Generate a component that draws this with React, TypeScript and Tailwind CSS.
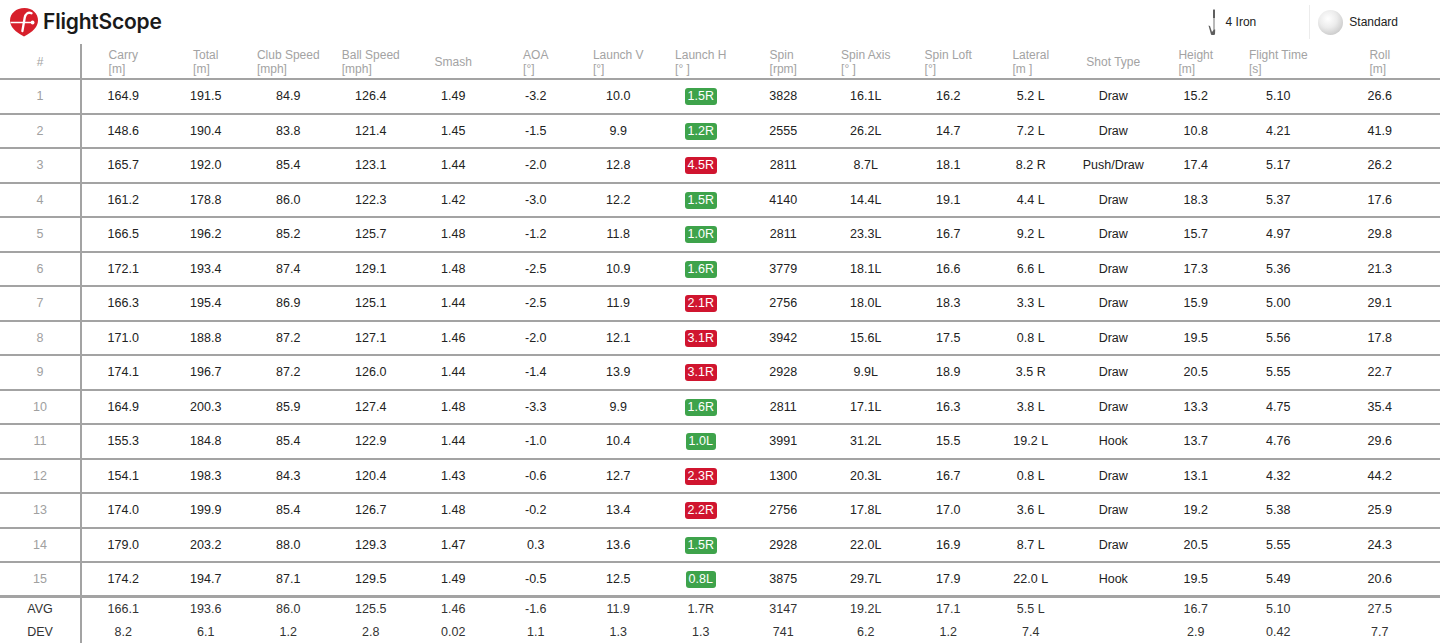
import React from "react"

type Shot = {
  carry: string
  total: string
  club: string
  ball: string
  smash: string
  aoa: string
  lv: string
  lh: string
  lhOk: boolean
  spin: string
  axis: string
  loft: string
  lateral: string
  type: string
  height: string
  time: string
  roll: string
}

const raw = `164.9 191.5 84.9 126.4 1.49 -3.2 10.0 1.5R g 3828 16.1L 16.2 5.2_L Draw 15.2 5.10 26.6
148.6 190.4 83.8 121.4 1.45 -1.5 9.9 1.2R g 2555 26.2L 14.7 7.2_L Draw 10.8 4.21 41.9
165.7 192.0 85.4 123.1 1.44 -2.0 12.8 4.5R r 2811 8.7L 18.1 8.2_R Push/Draw 17.4 5.17 26.2
161.2 178.8 86.0 122.3 1.42 -3.0 12.2 1.5R g 4140 14.4L 19.1 4.4_L Draw 18.3 5.37 17.6
166.5 196.2 85.2 125.7 1.48 -1.2 11.8 1.0R g 2811 23.3L 16.7 9.2_L Draw 15.7 4.97 29.8
172.1 193.4 87.4 129.1 1.48 -2.5 10.9 1.6R g 3779 18.1L 16.6 6.6_L Draw 17.3 5.36 21.3
166.3 195.4 86.9 125.1 1.44 -2.5 11.9 2.1R r 2756 18.0L 18.3 3.3_L Draw 15.9 5.00 29.1
171.0 188.8 87.2 127.1 1.46 -2.0 12.1 3.1R r 3942 15.6L 17.5 0.8_L Draw 19.5 5.56 17.8
174.1 196.7 87.2 126.0 1.44 -1.4 13.9 3.1R r 2928 9.9L 18.9 3.5_R Draw 20.5 5.55 22.7
164.9 200.3 85.9 127.4 1.48 -3.3 9.9 1.6R g 2811 17.1L 16.3 3.8_L Draw 13.3 4.75 35.4
155.3 184.8 85.4 122.9 1.44 -1.0 10.4 1.0L g 3991 31.2L 15.5 19.2_L Hook 13.7 4.76 29.6
154.1 198.3 84.3 120.4 1.43 -0.6 12.7 2.3R r 1300 20.3L 16.7 0.8_L Draw 13.1 4.32 44.2
174.0 199.9 85.4 126.7 1.48 -0.2 13.4 2.2R r 2756 17.8L 17.0 3.6_L Draw 19.2 5.38 25.9
179.0 203.2 88.0 129.3 1.47 0.3 13.6 1.5R g 2928 22.0L 16.9 8.7_L Draw 20.5 5.55 24.3
174.2 194.7 87.1 129.5 1.49 -0.5 12.5 0.8L g 3875 29.7L 17.9 22.0_L Hook 19.5 5.49 20.6`

const shots: Shot[] = raw.split("\n").map((line) => {
  const v = line.split(" ").map((s) => s.replace("_", " "))
  return {
    carry: v[0], total: v[1], club: v[2], ball: v[3], smash: v[4], aoa: v[5], lv: v[6],
    lh: v[7], lhOk: v[8] === "g", spin: v[9], axis: v[10], loft: v[11], lateral: v[12],
    type: v[13], height: v[14], time: v[15], roll: v[16],
  }
})

const summary = [
  { label: "AVG", values: ["166.1", "193.6", "86.0", "125.5", "1.46", "-1.6", "11.9", "1.7R", "3147", "19.2L", "17.1", "5.5 L", "", "16.7", "5.10", "27.5"] },
  { label: "DEV", values: ["8.2", "6.1", "1.2", "2.8", "0.02", "1.1", "1.3", "1.3", "741", "6.2", "1.2", "7.4", "", "2.9", "0.42", "7.7"] },
]

const headers: [string, string?][] = [
  ["Carry", "[m]"],
  ["Total", "[m]"],
  ["Club Speed", "[mph]"],
  ["Ball Speed", "[mph]"],
  ["Smash"],
  ["AOA", "[°]"],
  ["Launch V", "[°]"],
  ["Launch H", "[° ]"],
  ["Spin", "[rpm]"],
  ["Spin Axis", "[° ]"],
  ["Spin Loft", "[°]"],
  ["Lateral", "[m ]"],
  ["Shot Type"],
  ["Height", "[m]"],
  ["Flight Time", "[s]"],
  ["Roll", "[m]"],
]

const gridCols = "grid grid-cols-[82px_repeat(15,82.5px)_1fr]"

function Logo() {
  return (
    <div className="flex items-center gap-[4px]">
      <svg width="30" height="30" viewBox="0 0 30 30">
        <path d="M15.5 1C23.5 1 29 6.5 29 13.5 29 20 23.5 25 15 29.5 6.5 25 1 20 1 13.5 1 6.5 7 1 15.5 1Z" fill="#d71f2b" />
        <path d="M22.5 6.2c-3.4-1.4-6 .4-6.8 4.6L13.4 24" stroke="#fff" strokeWidth="2.3" fill="none" strokeLinecap="round" />
        <path d="M1.5 15.5h20.5" stroke="#fff" strokeWidth="1.5" />
        <circle cx="23.6" cy="15.5" r="1.9" fill="#fff" />
      </svg>
      <span className="text-[21px] font-semibold tracking-[-0.2px] text-[#1a1a1a] font-['Inter',sans-serif]">
        FlightScope
      </span>
    </div>
  )
}

function ClubIcon() {
  return (
    <svg width="12" height="28" viewBox="0 0 12 28">
      <path d="M8 1 L8 23" stroke="#9a9a9a" strokeWidth="1.4" />
      <path d="M8 2 L8 10" stroke="#555" strokeWidth="1.8" />
      <path d="M2.5 17.5 L4 18 L6 24 L8 21.5 L9.2 21.5 L9 26.5 C7.5 27.2 5.5 27.2 5 26.5 Z" fill="#5e5e5e" />
    </svg>
  )
}

function Ball() {
  return (
    <div className="h-[25px] w-[25px] rounded-full bg-[radial-gradient(circle_at_40%_35%,#ffffff_0%,#ececec_40%,#c4c4c4_85%,#b0b0b0_100%)]" />
  )
}

function Badge({ text, ok }: { text: string; ok: boolean }) {
  return (
    <span
      className={`inline-flex h-[17px] items-center rounded-[3px] px-[3px] text-[12.5px] text-white ${
        ok ? "bg-[#3ea34b]" : "bg-[#d0152f]"
      }`}
    >
      {text}
    </span>
  )
}

export default function App() {
  return (
    <div className="h-[643px] w-[1440px] overflow-hidden bg-white font-['Liberation_Sans',Arial,sans-serif] text-[#222]">
      {/* Top bar */}
      <div className="flex h-[44px] items-center justify-between pl-[9px] pr-[42px]">
        <Logo />
        <div className="flex items-center">
          <div className="flex items-center gap-[8px] pr-[53px]">
            <ClubIcon />
            <span className="text-[12px]">4 Iron</span>
          </div>
          <div className="flex h-[34px] items-center gap-[6px] border-l border-[#ececec] pl-[8px]">
            <Ball />
            <span className="text-[12px]">Standard</span>
          </div>
        </div>
      </div>

      {/* Header */}
      <div className={`${gridCols} h-[36px] border-b-2 border-[#a3a3a3]`}>
        <div className="flex items-center justify-center border-r-2 border-[#a3a3a3] pt-[2px] text-[12px] text-[#a3a3a3]">#</div>
        {headers.map(([name, unit]) => (
          <div key={name} className="flex items-center justify-center pt-[2px]">
            <div className="text-left text-[12px] leading-[14px] text-[#a3a3a3]">
              <div>{name}</div>
              {unit && <div>{unit}</div>}
            </div>
          </div>
        ))}
      </div>

      {/* Shots */}
      {shots.map((s, i) => {
        const cells = [s.carry, s.total, s.club, s.ball, s.smash, s.aoa, s.lv, null, s.spin, s.axis, s.loft, s.lateral, s.type, s.height, s.time, s.roll]
        return (
          <div
            key={i}
            className={`${gridCols} h-[34.5px] ${i === shots.length - 1 ? "border-b-[3px] border-[#a3a3a3]" : "border-b-2 border-[#a3a3a3]"}`}
          >
            <div className="flex items-center justify-center border-r-2 border-[#a3a3a3] pt-[1px] text-[12.5px] text-[#a0a0a0]">{i + 1}</div>
            {cells.map((c, j) => (
              <div key={j} className="flex items-center justify-center pt-[1px] text-[12.5px]">
                {c === null ? <Badge text={s.lh} ok={s.lhOk} /> : c}
              </div>
            ))}
          </div>
        )
      })}

      {/* Summary */}
      {summary.map((row) => (
        <div key={row.label} className={`${gridCols} h-[23px]`}>
          <div className="flex items-center justify-center border-r-2 border-[#a3a3a3] text-[12.5px] text-[#333]">{row.label}</div>
          {row.values.map((v, j) => (
            <div key={j} className="flex items-center justify-center text-[12.5px] text-[#333]">{v}</div>
          ))}
        </div>
      ))}
    </div>
  )
}
